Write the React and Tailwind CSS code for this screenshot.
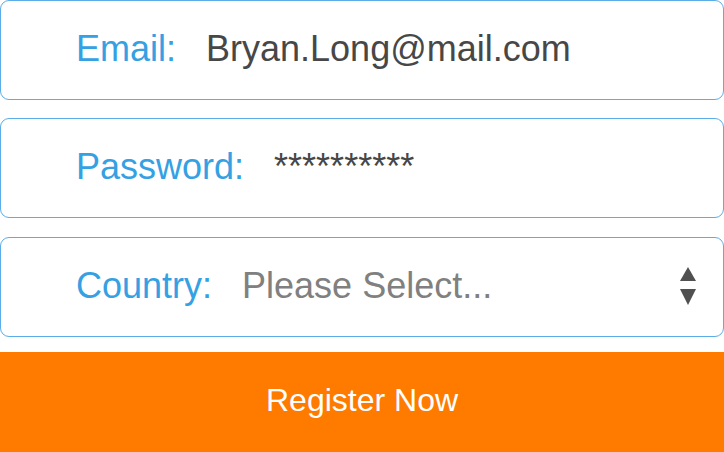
import React from "react";

const Field = ({ label, children, right }) => (
  <div className="flex h-[100px] items-center rounded-[9px] border border-[#5aade6] bg-white pb-[2px] pl-[75px] pr-[25px]">
    <span className="text-[36px] leading-none text-[#35a1e3]">{label}</span>
    <div className="ml-[30px] flex-1">{children}</div>
    {right}
  </div>
);

const App = () => {
  return (
    <div className="flex h-[452px] w-[724px] flex-col bg-white font-['Liberation_Sans',Arial,sans-serif]">
      <Field label="Email:">
        <span className="text-[36px] leading-none text-[#474747]">Bryan.Long@mail.com</span>
      </Field>
      <div className="mt-[18px]">
        <Field label="Password:">
          <span className="text-[36px] leading-none text-[#474747]">**********</span>
        </Field>
      </div>
      <div className="mt-[19px]">
        <Field
          label="Country:"
          right={
            <svg width="20" height="38" viewBox="0 0 20 38" className="text-[#505050]">
              <polygon points="10,0 18,14 2,14" fill="currentColor" />
              <polygon points="2,22 18,22 10,38" fill="currentColor" />
            </svg>
          }
        >
          <span className="text-[36px] leading-none text-[#808080]">Please Select...</span>
        </Field>
      </div>
      <button className="mt-[15px] flex h-[100px] w-full items-center justify-center bg-[#ff7b00] pb-[4px] text-[32px] text-white">
        Register Now
      </button>
    </div>
  );
};

export default App;
